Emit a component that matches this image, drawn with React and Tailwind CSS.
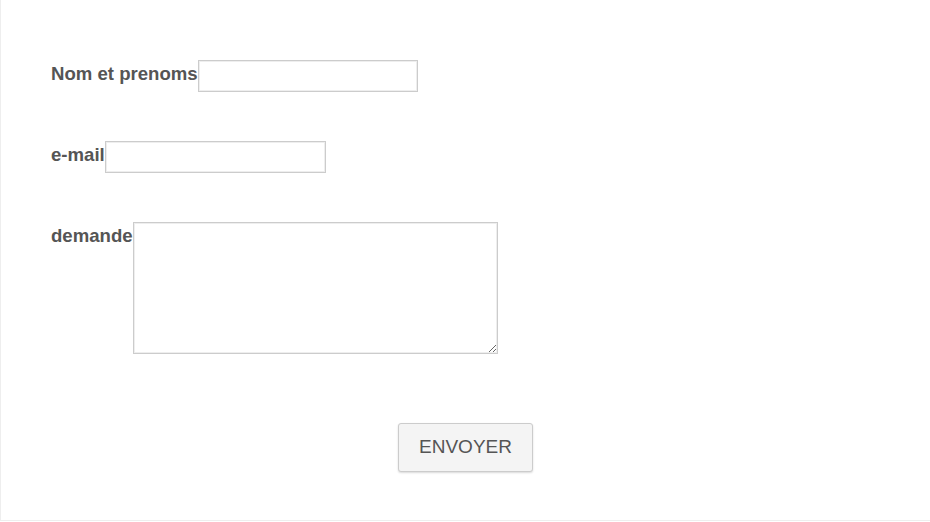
export default function App() {
  const label = 'text-[18.6px] font-bold leading-normal text-[#555]'
  return (
    <div
      className="h-[521px] w-full border-b border-l border-[#eeeeee] bg-white"
      style={{ fontFamily: '"Liberation Sans", Arial, sans-serif' }}
    >
      <form className="flex flex-col pl-[50px] pt-[60px]" onSubmit={(e) => e.preventDefault()}>
        <div className="flex items-start">
          <label className={label}>Nom et prenoms</label>
          <input type="text" className="h-[32px] w-[220px] border border-[#cccccc] bg-white px-2 shadow-[inset_0_0_0_1px_#eeeeee] outline-none" />
        </div>
        <div className="mt-[49px] flex items-start">
          <label className={label}>e-mail</label>
          <input type="email" className="h-[32px] w-[221px] border border-[#cccccc] bg-white px-2 shadow-[inset_0_0_0_1px_#eeeeee] outline-none" />
        </div>
        <div className="mt-[49px] flex items-start">
          <label className={label}>demande</label>
          <textarea className="h-[132px] w-[365px] resize border border-[#cccccc] bg-white p-2 shadow-[inset_0_0_0_1px_#eeeeee] outline-none" />
        </div>
      </form>
      <div className="mt-[69px] flex justify-center">
        <button className="h-[49px] w-[135px] rounded-[3px] border border-[#cccccc] bg-[#f4f4f4] text-[19px] text-[#555] shadow-[0_1px_2px_rgba(0,0,0,0.15)]">
          ENVOYER
        </button>
      </div>
    </div>
  )
}
